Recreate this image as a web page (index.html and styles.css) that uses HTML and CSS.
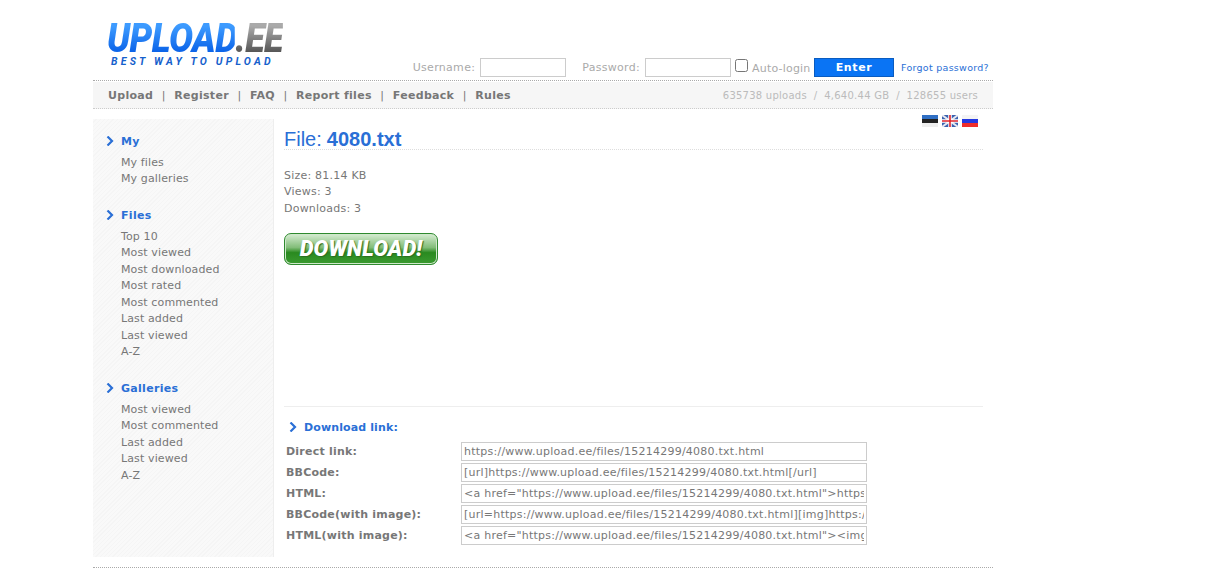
FILE: index.html
```html
<!DOCTYPE html>
<html lang="en">
<head>
<meta charset="utf-8">
<title>Upload.ee</title>
<link rel="stylesheet" href="styles.css">
</head>
<body>
<div class="page">
  <header class="top">
    <div class="logo">
      <div class="logo-main"><span class="logo-blue">UPLOAD</span><span class="logo-grey">.EE</span></div>
      <div class="logo-tag">BEST WAY TO UPLOAD</div>
    </div>
    <form class="login">
      <label class="login-label">Username:</label>
      <input class="login-input" type="text">
      <label class="login-label login-pass">Password:</label>
      <input class="login-input" type="text">
      <input class="login-check" type="checkbox">
      <span class="login-label login-auto">Auto-login</span>
      <button class="enter" type="button">Enter</button>
      <a class="forgot">Forgot password?</a>
    </form>
  </header>
  <nav class="nav">
    <div class="nav-links">
      <a>Upload</a><i>|</i><a>Register</a><i>|</i><a>FAQ</a><i>|</i><a>Report files</a><i>|</i><a>Feedback</a><i>|</i><a>Rules</a>
    </div>
    <div class="stats">635738 uploads &nbsp;/&nbsp; 4,640.44 GB &nbsp;/&nbsp; 128655 users</div>
  </nav>
  <div class="body">
    <aside class="side">
      <h3 class="side-head"><svg class="chev" viewBox="0 0 7 10"><path d="M1 .5 5.5 5 1 9.500" fill="none" stroke="#2a6fd6" stroke-width="2.200"/></svg>My</h3>
      <ul class="side-list"><li>My files</li><li>My galleries</li></ul>
      <h3 class="side-head"><svg class="chev" viewBox="0 0 7 10"><path d="M1 .5 5.5 5 1 9.500" fill="none" stroke="#2a6fd6" stroke-width="2.200"/></svg>Files</h3>
      <ul class="side-list"><li>Top 10</li><li>Most viewed</li><li>Most downloaded</li><li>Most rated</li><li>Most commented</li><li>Last added</li><li>Last viewed</li><li>A-Z</li></ul>
      <h3 class="side-head"><svg class="chev" viewBox="0 0 7 10"><path d="M1 .5 5.5 5 1 9.500" fill="none" stroke="#2a6fd6" stroke-width="2.200"/></svg>Galleries</h3>
      <ul class="side-list"><li>Most viewed</li><li>Most commented</li><li>Last added</li><li>Last viewed</li><li>A-Z</li></ul>
    </aside>
    <main class="main">
      <div class="flags">
        <svg class="flag" viewBox="0 0 16 12"><rect width="16" height="4" fill="#2f6fc4"/><rect y="4" width="16" height="4" fill="#222"/><rect y="8" width="16" height="4" fill="#eee"/></svg>
        <svg class="flag" viewBox="0 0 16 12"><rect width="16" height="12" fill="#3a62b0"/><path d="M0 0 16 12M16 0 0 12" stroke="#e8e8f0" stroke-width="2"/><path d="M8 0V12M0 6H16" stroke="#fff" stroke-width="3.500"/><path d="M8 0V12M0 6H16" stroke="#e0242c" stroke-width="1.600"/></svg>
        <svg class="flag" viewBox="0 0 16 12"><rect width="16" height="4" fill="#f4f4f4"/><rect y="4" width="16" height="4" fill="#2438e0"/><rect y="8" width="16" height="4" fill="#ee2c2c"/></svg>
      </div>
      <h1 class="title">File: <b>4080.txt</b></h1>
      <div class="info">
        <div>Size: 81.14 KB</div>
        <div>Views: 3</div>
        <div>Downloads: 3</div>
      </div>
      <a class="download">DOWNLOAD!</a>
      <section class="links">
        <h3 class="links-head"><svg class="chev" viewBox="0 0 7 10"><path d="M1 .5 5.5 5 1 9.500" fill="none" stroke="#2a6fd6" stroke-width="2.200"/></svg>Download link:</h3>
        <div class="link-grid">
          <label>Direct link:</label><input readonly value="https://www.upload.ee/files/15214299/4080.txt.html">
          <label>BBCode:</label><input readonly value="[url]https://www.upload.ee/files/15214299/4080.txt.html[/url]">
          <label>HTML:</label><input readonly value="&lt;a href=&quot;https://www.upload.ee/files/15214299/4080.txt.html&quot;&gt;https://www.upload.ee/files/15214299/4080.txt.html&lt;/a&gt;">
          <label>BBCode(with image):</label><input readonly value="[url=https://www.upload.ee/files/15214299/4080.txt.html][img]https://www.upload.ee/thumb/15214299/4080.txt.jpg[/img][/url]">
          <label>HTML(with image):</label><input readonly value="&lt;a href=&quot;https://www.upload.ee/files/15214299/4080.txt.html&quot;&gt;&lt;img src=&quot;https://www.upload.ee/thumb/15214299/4080.txt.jpg&quot;&gt;&lt;/a&gt;">
        </div>
      </section>
    </main>
  </div>
  <div class="foot"></div>
</div>
</body>
</html>
```

FILE: styles.css
```css
* { box-sizing: border-box; }
html, body { margin: 0; padding: 0; background: #fff; }
body { font: 11px "DejaVu Sans", Verdana, sans-serif; color: #777; overflow: hidden; }
.page { width: 900px; margin-left: 93px; }

.top { height: 81px; display: flex; justify-content: space-between; border-bottom: 1px dotted #aaa; }
.logo { padding: 19px 0 0 14px; width: 300px; font-family: Roboto, "Liberation Sans", Arial, sans-serif; font-weight: 900; font-style: italic; }
.logo-main { font-size: 41px; line-height: 38px; letter-spacing: -.6px; white-space: nowrap; transform: scaleX(.875); transform-origin: 0 50%; }
.logo-blue { background: linear-gradient(#3d9bff 25%, #0a62e8 80%); -webkit-background-clip: text; background-clip: text; color: transparent; }
.logo-grey { background: linear-gradient(#aaa 25%, #555 80%); -webkit-background-clip: text; background-clip: text; color: transparent; }
.logo-tag { font-size: 10.500px; font-weight: 700; line-height: 12px; letter-spacing: 3.2px; color: #1560cc; padding-left: 4px; margin-top: -1px; white-space: nowrap; }

.login { display: flex; align-items: center; height: 20px; margin-top: 57px; padding-right: 5px; color: #aaa; white-space: nowrap; flex: none; }
.login-label { color: #aaa; letter-spacing: .3px; }
.login-pass { margin-left: 16px; }
.login-input { width: 86px; height: 19px; margin-left: 5px; border: 1px solid #ccc; background: #fff; padding: 0; flex: none; }
.login-check { width: 13px; height: 13px; margin: 0 0 3px 4px; flex: none; }
.login-auto { margin-left: 4px; margin-top: 2px; letter-spacing: .2px; width: 58px; flex: none; }
.enter { width: 80px; height: 19px; margin-left: 4px; padding: 0; border: 1px solid #0a5cc0; background: #0a74f4; color: #fff; font: bold 11px "DejaVu Sans", Verdana, sans-serif; letter-spacing: .6px; flex: none; }
.forgot { margin-left: 7px; width: 87px; font-size: 9.500px; color: #2a6fd6; letter-spacing: .28px; white-space: nowrap; margin-top: 1px; flex: none; }

.nav { height: 28px; display: flex; justify-content: space-between; align-items: center; padding: 0 15px; background: #f6f6f6; border-top: 1px solid #fff; border-bottom: 1px dotted #ccc; }
.nav-links { font-weight: bold; color: #777; letter-spacing: .3px; white-space: nowrap; }
.nav-links i { font-style: normal; font-weight: normal; margin: 0 8.500px; color: #777; }
.stats { font-size: 10px; color: #bbb; letter-spacing: .25px; white-space: nowrap; }

.body { display: flex; margin-top: 10px; }
.side { width: 181px; height: 438px; padding: 14px 0 0 13px; border-right: 1px solid #eee; background: repeating-linear-gradient(135deg, #f9f9f9 0 2px, #f5f5f5 2px 3px); }
.side-head { margin: 0; display: flex; align-items: center; height: 16px; font-size: 11px; font-weight: bold; color: #2a6fd6; letter-spacing: .3px; }
.chev { width: 8px; height: 10px; margin-right: 7px; flex: none; }
.side-list { list-style: none; margin: 5.850px 0 19.200px 15px; padding: 0; line-height: 16.500px; letter-spacing: .12px; }

.main { width: 699px; margin-left: 10px; }
.flags { display: flex; justify-content: flex-end; gap: 4px; height: 12px; margin-top: -4px; padding-right: 5px; }
.flag { width: 16px; height: 12px; }
.title { margin: 2px 0 0; height: 21px; padding-top: 1px; border-bottom: 1px dotted #ddd; font: normal 20px/19px "Liberation Sans", Arial, sans-serif; color: #2a6fd6; white-space: nowrap; word-spacing: -.5px; }
.title b { font-weight: bold; }
.info { margin-top: 17.900px; line-height: 16.500px; letter-spacing: .22px; }
.download { display: block; width: 154px; height: 32px; margin-top: 15.700px; border: 1px solid #2f8a2f; border-radius: 7px; background: linear-gradient(#d6ecd2 0, #82bd79 45%, #2a8a20 62%, #3a9a30 100%); color: #fff; font: italic 900 22px/29px Roboto, "Liberation Sans", Arial, sans-serif; text-align: center; letter-spacing: .1px; text-shadow: 1px 1px 1px #2a6f20; box-shadow: inset 0 0 0 1px #cfe8cb; }
.links { margin-top: 141px; border-top: 1px solid #eee; padding: 12px 0 0 5px; }
.links-head { margin: 0 0 7px; display: flex; align-items: center; height: 16px; font-size: 11px; font-weight: bold; color: #2a6fd6; letter-spacing: .12px; }
.link-grid { display: grid; grid-template-columns: 175px 406px; grid-auto-rows: 19px; row-gap: 2px; margin-left: -3px; align-items: start; }
.link-grid label { font-weight: bold; color: #777; letter-spacing: .22px; line-height: 19px; white-space: nowrap; }
.link-grid input { width: 406px; height: 19px; border: 1px solid #ccc; padding: 0 2px; background: #fff; color: #777; font: 11px "DejaVu Sans", Verdana, sans-serif; letter-spacing: .24px; outline: none; }
.foot { margin-top: 10px; border-top: 1px dotted #aaa; }
```
